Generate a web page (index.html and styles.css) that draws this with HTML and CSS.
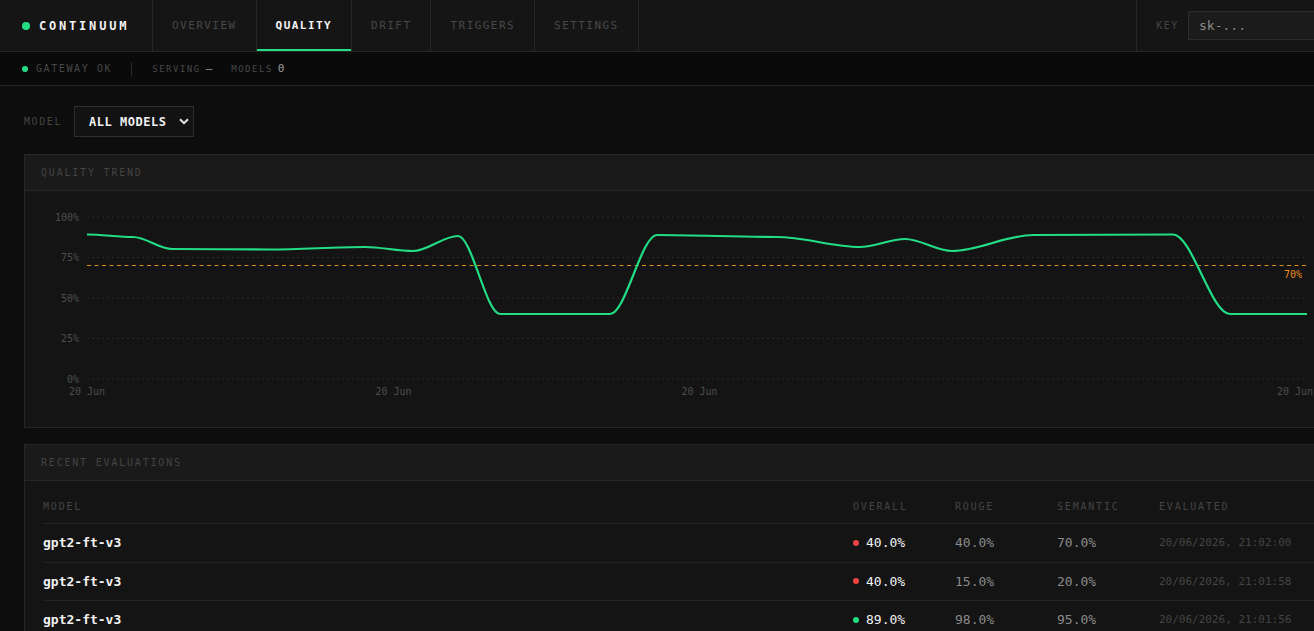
FILE: index.html
```html
<!DOCTYPE html>
<html lang="en">
<head>
    <meta charset="UTF-8">
    <meta name="viewport" content="width=device-width, initial-scale=1.0">
    <title>Continuum - Quality</title>
    <link rel="stylesheet" href="styles.css">
</head>
<body>
<div class="app">
    <!-- Top navigation -->
    <header class="topbar">
        <div class="brand"><span class="dot"></span>CONTINUUM</div>
        <nav class="tabs">
            <a class="tab">OVERVIEW</a>
            <a class="tab active">QUALITY</a>
            <a class="tab">DRIFT</a>
            <a class="tab">TRIGGERS</a>
            <a class="tab">SETTINGS</a>
        </nav>
        <div class="key">
            <span class="key-label">KEY</span>
            <input class="key-input" type="text" placeholder="sk-...">
        </div>
    </header>

    <!-- Status strip -->
    <div class="statusbar">
        <span class="status-dot"></span>
        <span class="status-ok">GATEWAY OK</span>
        <span class="sep"></span>
        <span class="stat-label">SERVING</span>
        <span class="stat-value">—</span>
        <span class="stat-label models">MODELS</span>
        <span class="stat-value">0</span>
    </div>

    <main class="content">
        <div class="filter">
            <span class="filter-label">MODEL</span>
            <div class="select">
                ALL MODELS
                <svg class="chevron" width="10" height="7" viewBox="0 0 10 7"><path d="M1 1.2 L5 5.2 L9 1.2" fill="none" stroke="#e8e8e8" stroke-width="2"/></svg>
            </div>
        </div>

        <section class="card">
            <div class="card-head">QUALITY TREND</div>
            <div class="chart">
                <!-- viewBox uses page coordinates so the plot numbers read directly -->
                <svg width="1314" height="236" viewBox="25 191 1314 236">
                    <g class="grid">
                        <line x1="87" y1="217" x2="1307" y2="217"/>
                        <line x1="87" y1="257.5" x2="1307" y2="257.5"/>
                        <line x1="87" y1="298" x2="1307" y2="298"/>
                        <line x1="87" y1="338.5" x2="1307" y2="338.5"/>
                        <line x1="87" y1="379" x2="1307" y2="379"/>
                    </g>
                    <g class="ticks-y">
                        <text x="79" y="220.5">100%</text>
                        <text x="79" y="261">75%</text>
                        <text x="79" y="301.5">50%</text>
                        <text x="79" y="342">25%</text>
                        <text x="79" y="382.5">0%</text>
                    </g>
                    <g class="ticks-x">
                        <text x="87" y="394.5">20 Jun</text>
                        <text x="393.5" y="394.5">20 Jun</text>
                        <text x="699.5" y="394.5">20 Jun</text>
                        <text x="1295" y="394.5">20 Jun</text>
                    </g>
                    <line class="threshold" x1="87" y1="265.5" x2="1307" y2="265.5"/>
                    <text class="threshold-label" x="1302" y="277.5">70%</text>
                    <path class="trend" d="M87 234.5
                        C102.3 234.5 117.7 237 133 237
                        C146 237 159 249 172 249
                        C204.7 249 237.3 249.5 270 249.5
                        C301.7 249.5 333.3 247 365 247
                        C381 247 397 251 413 251
                        C428 251 443 236 458 236
                        C472 236 486 314 500 314
                        L610 314
                        C625.7 314 641.3 235 657 235
                        C697 235 737 237 777 237
                        C804.7 237 832.3 247 860 247
                        C875 247 890 239 905 239
                        C920.7 239 936.3 251 952 251
                        C979 251 1006 235 1033 235
                        C1079.7 235 1126.3 234.5 1173 234.5
                        C1192 234.5 1211 314 1230 314
                        L1307 314"/>
                </svg>
            </div>
        </section>

        <section class="card evals">
            <div class="card-head">RECENT EVALUATIONS</div>
            <table class="eval-table">
                <colgroup>
                    <col class="c-model">
                    <col class="c-num">
                    <col class="c-num">
                    <col class="c-num">
                    <col class="c-date">
                </colgroup>
                <thead>
                    <tr>
                        <th>MODEL</th>
                        <th>OVERALL</th>
                        <th>ROUGE</th>
                        <th>SEMANTIC</th>
                        <th>EVALUATED</th>
                    </tr>
                </thead>
                <tbody>
                    <tr>
                        <td class="model">gpt2-ft-v3</td>
                        <td class="overall"><span class="pip bad"></span>40.0%</td>
                        <td class="num">40.0%</td>
                        <td class="num">70.0%</td>
                        <td class="date">20/06/2026, 21:02:00</td>
                    </tr>
                    <tr>
                        <td class="model">gpt2-ft-v3</td>
                        <td class="overall"><span class="pip bad"></span>40.0%</td>
                        <td class="num">15.0%</td>
                        <td class="num">20.0%</td>
                        <td class="date">20/06/2026, 21:01:58</td>
                    </tr>
                    <tr>
                        <td class="model">gpt2-ft-v3</td>
                        <td class="overall"><span class="pip good"></span>89.0%</td>
                        <td class="num">98.0%</td>
                        <td class="num">95.0%</td>
                        <td class="date">20/06/2026, 21:01:56</td>
                    </tr>
                </tbody>
            </table>
        </section>
    </main>
</div>
</body>
</html>
```

FILE: styles.css
```css
html, body {
    margin: 0;
    overflow: hidden;
    background-color: #0d0d0d;
}

body {
    font-family: 'DejaVu Sans Mono', 'Liberation Mono', monospace;
    color: #e0e0e0;
}

.app {
    width: 1364px;
}

/* Top navigation */
.topbar {
    display: flex;
    height: 51px;
    background-color: #151515;
    border-bottom: 1px solid #262626;
}

.brand {
    display: flex;
    align-items: center;
    width: 130px;
    padding-left: 22px;
    border-right: 1px solid #262626;
    font-size: 12px;
    font-weight: bold;
    letter-spacing: 2.8px;
    color: #f2f2f2;
}

.dot {
    width: 8px;
    height: 8px;
    border-radius: 50%;
    background-color: #22dd85;
    margin-right: 9px;
}

.tabs {
    display: flex;
}

.tab {
    display: flex;
    align-items: center;
    padding: 0 19px;
    border-right: 1px solid #262626;
    font-size: 11px;
    letter-spacing: 1.45px;
    color: #484848;
    position: relative;
}

.tab.active {
    color: #f4f4f4;
    font-weight: bold;
}

.tab.active::after {
    content: '';
    position: absolute;
    left: 0;
    right: 0;
    bottom: 0;
    height: 2px;
    background-color: #22dd85;
}

.key {
    display: flex;
    align-items: center;
    margin-left: auto;
    padding: 0 16px 0 19px;
    border-left: 1px solid #262626;
}

.key-label {
    font-size: 10px;
    letter-spacing: 1.6px;
    color: #444;
    margin-right: 9px;
}

.key-input {
    width: 160px;
    height: 29px;
    box-sizing: border-box;
    padding: 0 10px;
    background-color: #1b1b1b;
    border: 1px solid #2c2c2c;
    font-family: inherit;
    font-size: 13px;
    color: #999;
    outline: none;
}

.key-input::placeholder {
    color: #8a8a8a;
}

/* Status strip */
.statusbar {
    display: flex;
    align-items: center;
    height: 33px;
    padding-left: 22px;
    background-color: #0a0a0a;
    border-bottom: 1px solid #222;
}

.status-dot {
    width: 6px;
    height: 6px;
    border-radius: 50%;
    background-color: #22dd85;
    margin-right: 8px;
}

.status-ok {
    font-size: 10px;
    letter-spacing: 1.6px;
    color: #474747;
}

.sep {
    width: 1px;
    height: 14px;
    background-color: #2a2a2a;
    margin: 0 20px 0 19px;
}

.stat-label {
    font-size: 9px;
    letter-spacing: 1.5px;
    color: #474747;
}

.stat-label.models {
    margin-left: 19px;
}

.stat-value {
    font-size: 11px;
    color: #9a9a9a;
    margin-left: 5px;
}

/* Page content */
.content {
    padding: 20px 24px;
}

.filter {
    display: flex;
    align-items: center;
    margin-bottom: 17px;
}

.filter-label {
    font-size: 10px;
    letter-spacing: 1.6px;
    color: #444;
    margin-right: 12px;
}

.select {
    display: flex;
    align-items: center;
    height: 29px;
    padding: 0 4px 0 14px;
    background-color: #121212;
    border: 1px solid #2e2e2e;
    font-size: 12px;
    font-weight: bold;
    letter-spacing: 0.5px;
    color: #f0f0f0;
}

.chevron {
    margin-left: 13px;
}

.card {
    border: 1px solid #262626;
    background-color: #141414;
    margin-bottom: 16px;
}

.card-head {
    height: 35px;
    display: flex;
    align-items: center;
    padding-left: 16px;
    background-color: #1a1a1a;
    border-bottom: 1px solid #262626;
    font-size: 10px;
    letter-spacing: 1.8px;
    color: #444;
}

.chart {
    height: 236px;
}

.chart svg {
    display: block;
}

.grid line {
    stroke: #2a2a2a;
    stroke-width: 1;
    stroke-dasharray: 2 3;
}

.ticks-y text {
    font-family: 'DejaVu Sans Mono', monospace;
    font-size: 10px;
    fill: #4e4e4e;
    text-anchor: end;
}

.ticks-x text {
    font-family: 'DejaVu Sans Mono', monospace;
    font-size: 10px;
    fill: #4e4e4e;
    text-anchor: middle;
}

.threshold {
    stroke: #d98e1f;
    stroke-width: 1;
    stroke-dasharray: 4 3.5;
}

.threshold-label {
    font-family: 'DejaVu Sans Mono', monospace;
    font-size: 10px;
    fill: #ef8a22;
    text-anchor: end;
}

.trend {
    fill: none;
    stroke: #22dd85;
    stroke-width: 2.2;
}

/* Evaluations table */
.eval-table {
    width: calc(100% - 36px);
    margin: 0 18px;
    border-collapse: collapse;
    table-layout: fixed;
}

.c-model { width: 810px; }
.c-num { width: 102px; }
.c-date { width: 162px; }

.eval-table th {
    text-align: left;
    font-size: 10px;
    font-weight: normal;
    letter-spacing: 1.8px;
    color: #444;
    padding: 20px 0 11px;
    border-bottom: 1px solid #262626;
}

.eval-table td {
    height: 37.5px;
    padding: 0;
    border-bottom: 1px solid #222;
}

.model {
    font-size: 13px;
    font-weight: bold;
    color: #f2f2f2;
}

.overall {
    font-size: 13px;
    color: #f2f2f2;
}

.pip {
    display: inline-block;
    width: 6px;
    height: 6px;
    border-radius: 50%;
    margin: 0 7px 2px 0;
    vertical-align: middle;
}

.pip.bad {
    background-color: #ef4444;
}

.pip.good {
    background-color: #22dd85;
}

.num {
    font-size: 13px;
    color: #8a8a8a;
}

.date {
    font-size: 11px;
    color: #444;
}
```
